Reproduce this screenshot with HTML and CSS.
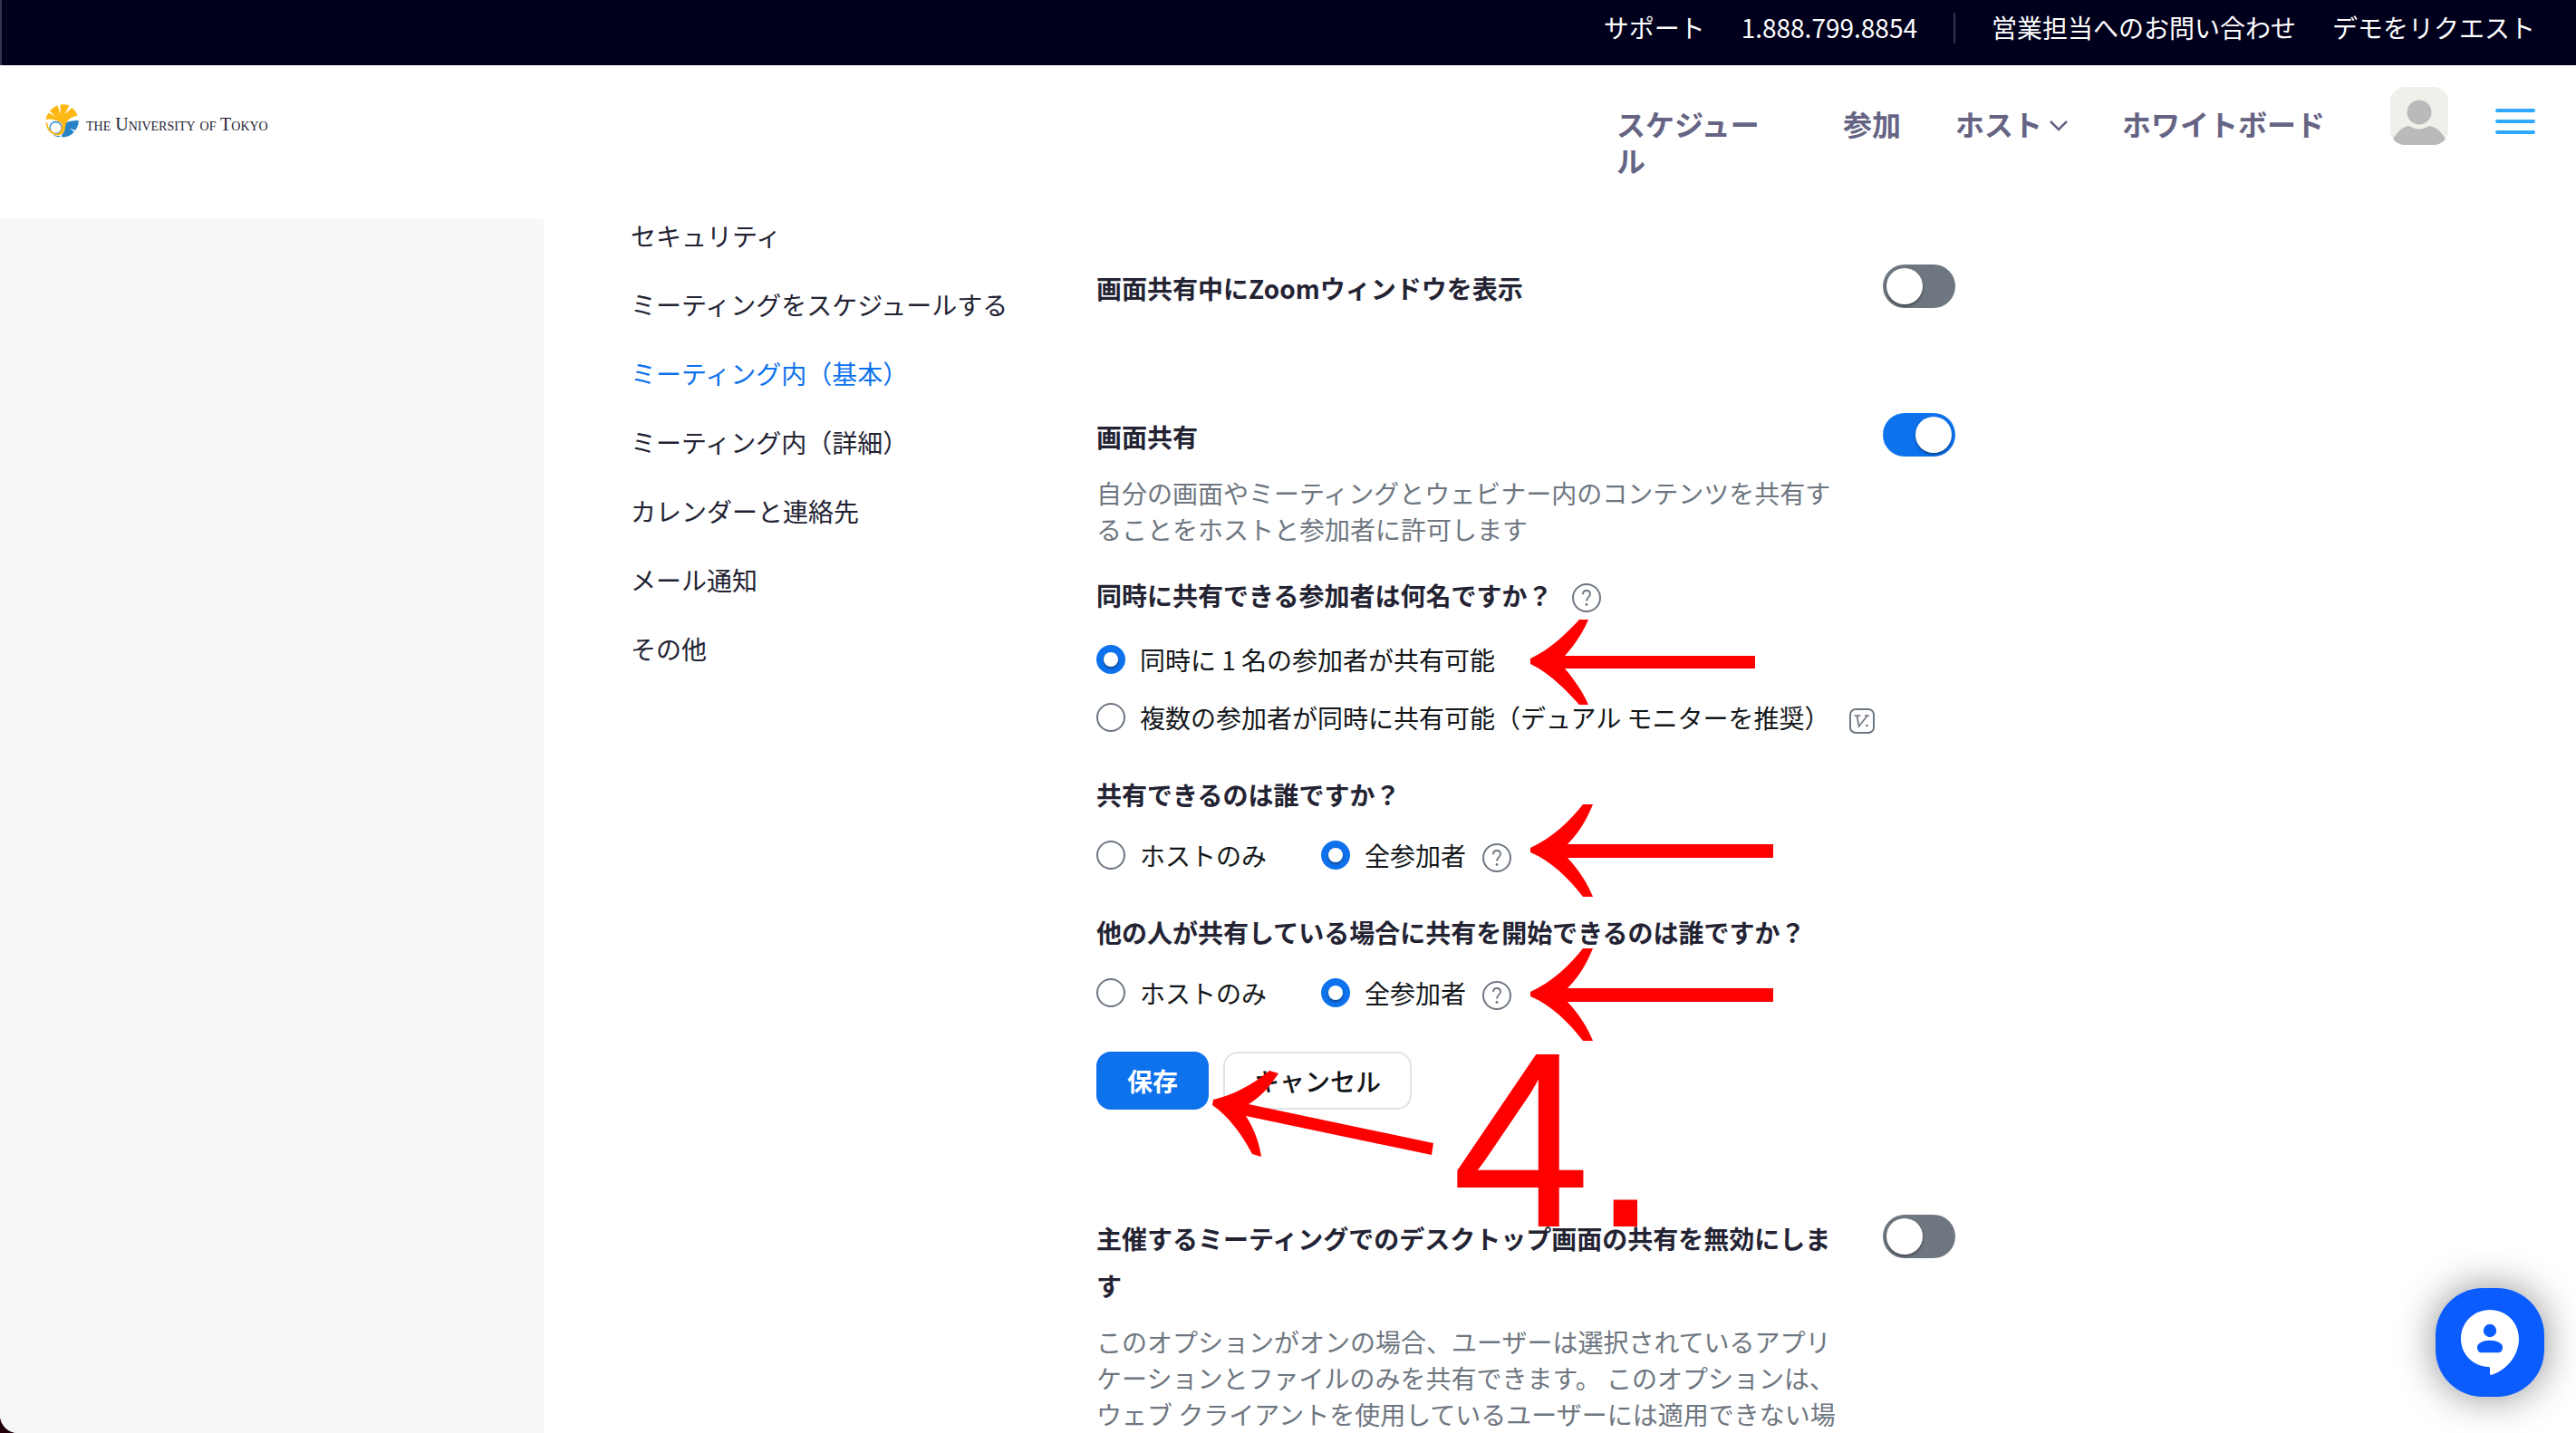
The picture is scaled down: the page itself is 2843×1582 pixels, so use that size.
FILE: index.html
```html
<!DOCTYPE html>
<html lang="ja">
<head>
<meta charset="utf-8">
<title>設定 - ミーティング内（基本）</title>
<link rel="stylesheet" href="styles.css">
</head>
<body>
<svg class="sprite" aria-hidden="true">
  <symbol id="help" viewBox="0 0 32 32">
    <circle cx="16" cy="16" r="15" fill="none" stroke="currentColor" stroke-width="2"/>
    <path d="M12 12.2c0-2.5 1.700-4.200 4-4.200s4 1.600 4 3.900c0 3.100-4 3.400-4 7.600" fill="none" stroke="currentColor" stroke-width="1.800"/>
    <circle cx="16" cy="23.500" r="1.400" fill="currentColor"/>
  </symbol>
</svg>
<div class="app">
  <div class="topbar">
    <a href="#">サポート</a>
    <a href="#">1.888.799.8854</a>
    <span class="divider"></span>
    <a href="#">営業担当へのお問い合わせ</a>
    <a href="#">デモをリクエスト</a>
  </div>

  <header class="header">
    <a class="logo" href="#">
      <svg class="logo-mark" viewBox="0 0 37 37" aria-hidden="true">
        <path fill="#fdb813" d="M0.500 17.200C1 13.500 2 11.500 4 9.500L11 14 5 7.500C7.500 4.500 10 2.500 13.500 1.500L17 11 16.500 0.800C20 0 23 0.300 26.500 1.800L21.500 11 29.500 4C32 6 34.500 9 35.500 12.800C30 14 25.500 16 24 20C22.500 25 23.500 33 14 34.500C6 34 1.200 28 0.600 20.500L2 20.500C3 27 7 32.500 13 33C16.500 32.500 18.800 28 18.500 24C18 19.500 8 15 0.500 17.200Z"/>
        <path fill="#fff" d="M2 20.500C3 19 8 17.500 13 18.500C18 20 20 24 18.500 28C17 32 15 33.500 13 33C7 32.500 3 27 2 20.500Z"/>
        <circle cx="11.500" cy="26" r="6.500" fill="#fff" stroke="#2583c6" stroke-width="1.300"/>
        <path fill="none" stroke="#fdb813" stroke-width="1.400" d="M1.300 20.500C2 27 7 33 13.500 33.200C17 32 18.500 28 18.500 24"/>
        <path fill="#2583c6" d="M23 21C25 18.500 30 18.300 36.700 18C36.800 22 35.500 26 33 29L27 26.500 31.800 30.800C28 35 23 36.800 18 36.300C18 33.800 18.500 33 20.500 31.200C22 28 22 24 23 21ZM8 33.500C10.500 34.800 13 35 16 35L16 36.300C13 36.300 10 35.200 8 33.500Z"/>
      </svg>
      <span class="logo-text">the University of Tokyo</span>
    </a>
    <nav class="nav">
      <a class="nav-schedule" href="#">スケジュール</a>
      <a href="#">参加</a>
      <a class="nav-host" href="#">ホスト<svg width="20" height="12" viewBox="0 0 20 12" aria-hidden="true"><path d="M1 1l9 9 9-9" fill="none" stroke="currentColor" stroke-width="2.500"/></svg></a>
      <a href="#">ホワイトボード</a>
    </nav>
    <a class="avatar" href="#" aria-label="プロフィール">
      <svg viewBox="0 0 64 64" aria-hidden="true"><rect width="64" height="64" fill="#f0efea"/><circle cx="32" cy="28" r="13.500" fill="#bababa"/><path d="M3 58C7 50 13 44 21 43C28 47.500 36 47.500 43 43C51 44 57 50 61 58V64H3Z" fill="#bababa"/></svg>
    </a>
    <button class="menu-button" type="button" aria-label="メニュー"><span></span><span></span><span></span></button>
  </header>

  <main class="main">
    <aside class="sidebar"></aside>
    <nav class="sections">
      <a href="#">セキュリティ</a>
      <a href="#">ミーティングをスケジュールする</a>
      <a class="active" href="#">ミーティング内（基本）</a>
      <a href="#">ミーティング内（詳細）</a>
      <a href="#">カレンダーと連絡先</a>
      <a href="#">メール通知</a>
      <a href="#">その他</a>
    </nav>
    <div class="settings">
      <section class="setting">
        <div class="setting-body">
          <h3><label for="show-window">画面共有中にZoomウィンドウを表示</label></h3>
        </div>
        <input class="toggle" type="checkbox" id="show-window">
      </section>

      <section class="setting">
        <div class="setting-body">
          <h3><label for="sharing">画面共有</label></h3>
          <p>自分の画面やミーティングとウェビナー内のコンテンツを共有することをホストと参加者に許可します</p>
          <form class="questions">
            <div class="question question-count">
              <h4>同時に共有できる参加者は何名ですか？ <svg class="help"><use href="#help"/></svg></h4>
              <div class="choices choices-stacked">
                <label><input type="radio" name="count" checked>同時に 1 名の参加者が共有可能</label>
                <div class="choice">
                  <label><input type="radio" name="count">複数の参加者が同時に共有可能（デュアル モニターを推奨）</label>
                  <svg class="version" viewBox="0 0 28 28" aria-hidden="true"><rect x="1" y="1" width="26" height="26" rx="6" fill="none" stroke="currentColor" stroke-width="2"/><path d="M5.500 8h7M17 8h5M8.500 8l2 12L20 8" fill="none" stroke="currentColor" stroke-width="1.700"/><circle cx="19.500" cy="19" r="1.300" fill="currentColor"/></svg>
                </div>
              </div>
            </div>
            <div class="question">
              <h4>共有できるのは誰ですか？</h4>
              <div class="choices">
                <label><input type="radio" name="who">ホストのみ</label>
                <div class="choice">
                  <label><input type="radio" name="who" checked>全参加者</label>
                  <svg class="help"><use href="#help"/></svg>
                </div>
              </div>
            </div>
            <div class="question">
              <h4>他の人が共有している場合に共有を開始できるのは誰ですか？</h4>
              <div class="choices">
                <label><input type="radio" name="start">ホストのみ</label>
                <div class="choice">
                  <label><input type="radio" name="start" checked>全参加者</label>
                  <svg class="help"><use href="#help"/></svg>
                </div>
              </div>
            </div>
            <div class="actions">
              <button class="save" type="button">保存</button>
              <button class="cancel" type="button">キャンセル</button>
            </div>
          </form>
        </div>
        <input class="toggle" type="checkbox" id="sharing" checked>
      </section>

      <section class="setting">
        <div class="setting-body">
          <h3><label for="disable-desktop">主催するミーティングでのデスクトップ画面の共有を無効にします</label></h3>
          <p>このオプションがオンの場合、ユーザーは選択されているアプリケーションとファイルのみを共有できます。 このオプションは、ウェブ クライアントを使用しているユーザーには適用できない場</p>
        </div>
        <input class="toggle" type="checkbox" id="disable-desktop">
      </section>

      <div class="annotations">
        <!-- red pointers: origin is the top left of the settings column -->
        <svg width="760" height="1100" fill="#f00" aria-hidden="true">
          <path d="M479 485C501 475 521 455 533 442H543C537 456 528 470 517 482H727V496H517C529 510 538 524 543 536H533C515 516 498 500 479 491Z"/>
          <path id="pointer" d="M479 694C503 683 523 664 537 646H548C541 663 533 677 520 690H747V705H520C533 719 542 733 548 748H537C521 727 501 708 479 699Z"/>
          <use href="#pointer" y="159"/>
          <path d="M129 972C151 967 173 955 191 940L201 943C193 955 183 968 168 977L372 1020 370 1033 165 990C174 1004 180 1020 182 1035L172 1032C162 1013 148 992 128 978Z"/>
        </svg>
        <span class="step">4.</span>
      </div>
    </div>
  </main>

  <button class="chat" type="button" aria-label="チャット">
    <svg viewBox="0 0 120 120" aria-hidden="true">
      <path fill="#fff" d="M60 24C78 24 92 38 92 56C92 74 79 90 63 95.500C61 96.200 60 96 60 94V89C60 87.500 59.500 87 58 87C41 86 28 73 28 56C28 38 42 24 60 24Z"/>
      <circle cx="60" cy="47" r="7.200"/>
      <path d="M46 65C46 61 52 57.700 60 57.700S74 61 74 65V66C74 69 72 71.300 69 71.300H51C48 71.300 46 69 46 66Z"/>
    </svg>
  </button>
</div>
</body>
</html>
```

FILE: styles.css
```css
* {
  box-sizing: border-box;
}

body {
  margin: 0;
  background: #24000b;
  color: #232333;
  font-family: "Noto Sans CJK JP", sans-serif;
  font-size: 28px;
  line-height: 40px;
}

a {
  color: inherit;
  text-decoration: none;
}

button,
input {
  margin: 0;
  font: inherit;
}

h3,
h4,
p {
  margin: 0;
}

.sprite {
  display: none;
}

.app {
  display: flex;
  flex-direction: column;
  height: 100vh;
  overflow: hidden;
  background: #fff;
  border-bottom-left-radius: 20px;
}

/* Top bar */
.topbar {
  display: flex;
  flex: none;
  justify-content: flex-end;
  gap: 40px;
  height: 72px;
  padding: 10px 45px 0 0;
  border-left: 2px solid #33334a;
  background: #00001c;
  color: #fff;
}

.divider {
  width: 2px;
  height: 34px;
  margin-top: 4px;
  background: #333349;
}

/* Header */
.header {
  display: flex;
  flex: none;
  align-items: flex-start;
  height: 170px;
  padding: 0 45px 0 50px;
}

.logo {
  display: flex;
  align-items: flex-start;
  gap: 8px;
  margin: 43px auto 0 0;
}

.logo-mark {
  width: 37px;
  height: 37px;
}

.logo-text {
  padding-top: 2px;
  font-family: "Liberation Serif", serif;
  font-size: 20px;
  font-variant: small-caps;
  white-space: nowrap;
}

.nav {
  display: flex;
  gap: 60px;
  margin: 44px 72px 0 0;
  color: #666484;
  font-size: 32px;
  font-weight: 700;
  white-space: nowrap;
}

.nav-schedule {
  width: 190px;
  padding-right: 20px;
  white-space: normal;
  line-break: anywhere;
}

.nav-host {
  display: flex;
  align-items: center;
  gap: 8px;
  height: 40px;
}

.nav-host svg {
  margin-top: 6px;
}

.avatar {
  width: 64px;
  height: 64px;
  margin: 24px 52px 0 0;
  border-radius: 16px;
  overflow: hidden;
}

.avatar svg {
  display: block;
}

.menu-button {
  display: flex;
  flex-direction: column;
  gap: 8px;
  width: 44px;
  margin-top: 48px;
  padding: 0;
  border: 0;
  background: none;
}

.menu-button span {
  height: 4px;
  border-radius: 2px;
  background: #2ea9ff;
}

/* Page body */
.main {
  display: flex;
  flex: 1;
  min-height: 0;
}

.sidebar {
  flex: none;
  width: 600px;
  background: #f7f7f9;
}

.sections {
  display: flex;
  flex: none;
  flex-direction: column;
  gap: 40px;
  width: 514px;
  margin-left: 96px;
  font-size: 28px;
  line-height: 36px;
}

.sections .active {
  color: #0e72ed;
}

.settings {
  position: relative;
  display: flex;
  flex-direction: column;
  gap: 112px;
  padding-top: 50px;
}

.setting {
  display: flex;
  gap: 40px;
}

.setting-body {
  width: 828px;
}

.setting h3 {
  font-size: 28px;
  font-weight: 700;
  line-height: 52px;
}

.setting p {
  margin-top: 16px;
  color: #6e7680;
}

.toggle {
  flex: none;
  appearance: none;
  width: 80px;
  height: 48px;
  padding: 4px;
  border-radius: 24px;
  background: #6e7680;
}

.toggle::after {
  content: "";
  display: block;
  width: 40px;
  height: 40px;
  border-radius: 50%;
  background: #fff;
  box-shadow: 0 2px 3px rgba(0, 0, 0, 0.4);
}

.toggle:checked {
  background: #0e72ed;
}

.toggle:checked::after {
  margin-left: auto;
}

/* Sharing options */
.questions {
  display: flex;
  flex-direction: column;
  gap: 45px;
  margin-top: 33px;
  padding-bottom: 4px;
}

.question {
  display: flex;
  flex-direction: column;
  gap: 27px;
  color: #131619;
}

.question-count {
  gap: 31px;
}

.question h4 {
  display: flex;
  align-items: center;
  gap: 22px;
  color: #232333;
  font-size: 28px;
  font-weight: 700;
}

.choices {
  display: flex;
  gap: 60px;
  white-space: nowrap;
}

.choices-stacked {
  flex-direction: column;
  gap: 24px;
}

.choice {
  display: flex;
  align-items: center;
  gap: 18px;
}

.choices label {
  display: flex;
  align-items: center;
  gap: 16px;
}

.choices input {
  flex: none;
  appearance: none;
  width: 32px;
  height: 32px;
  border: 2px solid #6e7680;
  border-radius: 50%;
}

.choices input:checked {
  padding: 6px;
  border-color: #0e72ed;
  background: #0e72ed;
}

.choices input:checked::after {
  content: "";
  display: block;
  width: 16px;
  height: 16px;
  border-radius: 50%;
  background: #fff;
  box-shadow: 0 2px 3px rgba(0, 0, 0, 0.4);
}

.help {
  flex: none;
  width: 32px;
  height: 32px;
  margin-top: 6px;
  color: #6e7680;
}

.version {
  flex: none;
  width: 28px;
  height: 28px;
  margin: 8px 0 0 4px;
  color: #6e7680;
}

.actions {
  display: flex;
  gap: 16px;
}

.actions button {
  height: 64px;
  padding: 0 32px;
  border: 2px solid #dfe3e8;
  border-radius: 16px;
  background: #fff;
  color: #131619;
  font-weight: 500;
}

.actions .save {
  border-color: #0e72ed;
  background: #0e72ed;
  color: #fff;
  font-weight: 700;
}

/* Step markers drawn over the form */
.annotations {
  position: absolute;
  top: 0;
  left: 0;
  pointer-events: none;
}

.step {
  position: absolute;
  top: 876px;
  left: 392px;
  color: #f00;
  font-family: "Liberation Sans", sans-serif;
  font-size: 276px;
  line-height: 280px;
}

/* Chat launcher */
.chat {
  position: fixed;
  right: 35px;
  bottom: 40px;
  width: 120px;
  height: 120px;
  padding: 0;
  border: 0;
  border-radius: 52px;
  background: #0b5cff;
  box-shadow: 0 0 44px rgba(0, 0, 0, 0.45);
}

.chat svg {
  display: block;
  fill: #0b5cff;
}
```
